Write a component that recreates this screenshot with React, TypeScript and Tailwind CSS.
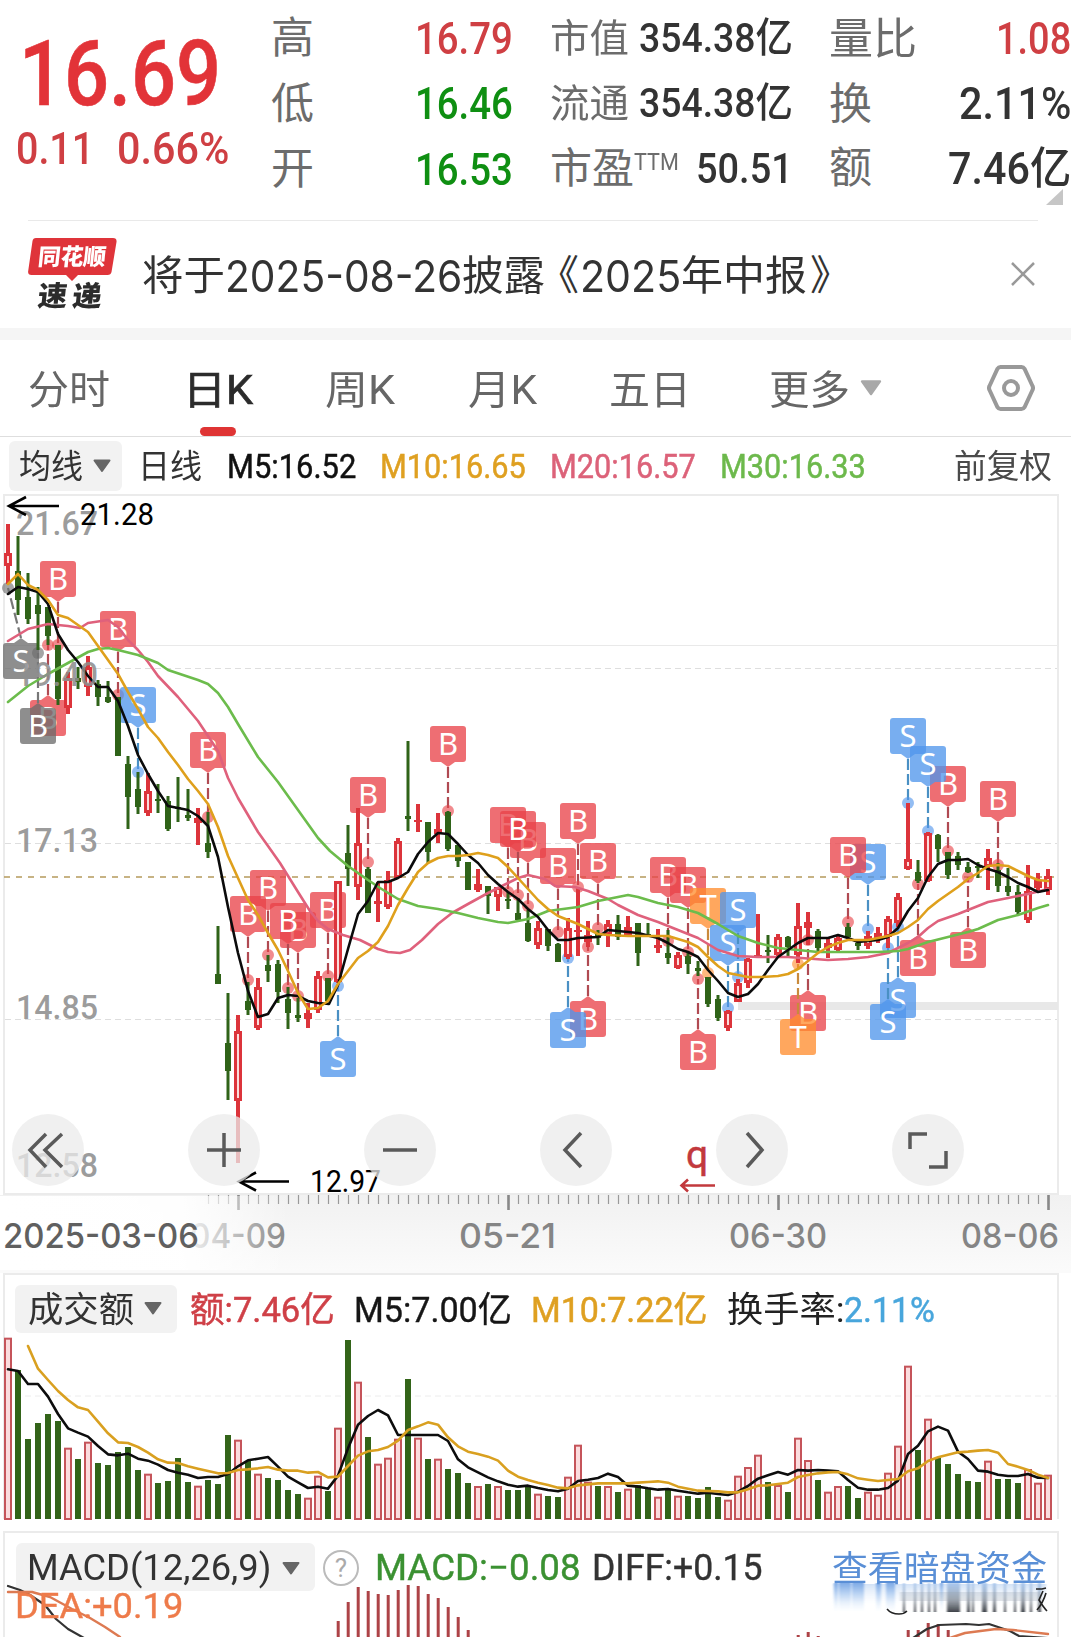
import { useLayoutEffect, useRef, useState } from 'react';
import clsx from 'clsx';

type Pt = [number, number];
type Candle = ['r' | 'g', number, number, number, number];
type Marker = {
  kind: 'B' | 'S' | 'T';
  tone: 'red' | 'blue' | 'orange' | 'gray';
  x: number;
  top: number;
  dot: number;
  up?: boolean;
  dotX?: number;
};

const STEP = 10;
const X0 = 8;

// [direction, high, low, body top, body bottom]
const candles: Candle[] = [
  ['r', 524, 584, 553, 566], ['g', 536, 615, 571, 600], ['g', 573, 624, 597, 619], ['g', 587, 650, 605, 614],
  ['g', 607, 645, 607, 636], ['g', 645, 705, 645, 699], ['r', 672, 714, 678, 708], ['g', 667, 689, 678, 682],
  ['r', 656, 696, 667, 687], ['g', 680, 706, 684, 697], ['g', 681, 703, 697, 702], ['g', 697, 756, 697, 756],
  ['g', 756, 829, 764, 797], ['g', 772, 814, 789, 807], ['r', 773, 816, 791, 813], ['g', 784, 813, 799, 801],
  ['g', 796, 831, 801, 829], ['g', 777, 822, 807, 808], ['g', 789, 821, 815, 818], ['r', 808, 845, 818, 823],
  ['g', 812, 858, 843, 852], ['g', 926, 984, 974, 984], ['g', 993, 1100, 1043, 1071], ['r', 1015, 1163, 1031, 1101],
  ['g', 982, 1015, 1001, 1010], ['r', 978, 1030, 987, 1028], ['g', 955, 982, 965, 971], ['g', 960, 1003, 964, 992],
  ['g', 987, 1029, 999, 1013], ['g', 998, 1022, 1015, 1018], ['r', 1003, 1028, 1013, 1019], ['r', 971, 1013, 976, 1010],
  ['g', 978, 1001, 978, 1001], ['r', 881, 983, 881, 982], ['g', 825, 886, 853, 869], ['r', 808, 900, 843, 887],
  ['g', 867, 913, 869, 913], ['r', 882, 922, 901, 904], ['r', 871, 909, 880, 907], ['r', 838, 878, 841, 878],
  ['g', 741, 831, 816, 819], ['r', 804, 832, 820, 822], ['g', 822, 863, 822, 852], ['r', 813, 843, 829, 834],
  ['g', 811, 851, 812, 849], ['g', 845, 867, 845, 861], ['g', 862, 890, 862, 890], ['r', 869, 892, 884, 890],
  ['g', 886, 914, 886, 896], ['r', 887, 911, 887, 897], ['g', 892, 909, 899, 901], ['g', 898, 920, 913, 920],
  ['g', 910, 942, 923, 941], ['r', 921, 949, 928, 945], ['g', 929, 951, 929, 946], ['g', 943, 962, 944, 962],
  ['r', 918, 959, 928, 957], ['r', 887, 956, 930, 932], ['r', 921, 947, 935, 942], ['g', 930, 945, 933, 938],
  ['r', 920, 947, 924, 935], ['g', 915, 940, 924, 937], ['r', 916, 937, 927, 935], ['g', 923, 966, 923, 953],
  ['g', 923, 937, 934, 935], ['r', 929, 953, 945, 948], ['g', 930, 964, 953, 958], ['r', 952, 969, 955, 968],
  ['g', 952, 974, 956, 964], ['g', 961, 976, 968, 971], ['g', 977, 1007, 977, 1004], ['g', 995, 1021, 999, 1018],
  ['r', 1010, 1031, 1011, 1028], ['r', 979, 1002, 983, 1002], ['r', 958, 988, 959, 983], ['r', 914, 957, 955, 957],
  ['g', 935, 963, 950, 951], ['r', 934, 956, 937, 955], ['g', 936, 957, 937, 947], ['r', 903, 963, 926, 955],
  ['r', 912, 945, 922, 928], ['g', 929, 951, 931, 948], ['r', 938, 958, 943, 948], ['r', 935, 953, 938, 950],
  ['g', 923, 937, 927, 937], ['g', 941, 950, 943, 946], ['r', 931, 949, 936, 946], ['r', 927, 943, 933, 938],
  ['r', 916, 948, 919, 937], ['r', 893, 927, 897, 923], ['r', 803, 870, 859, 869], ['g', 860, 883, 872, 881],
  ['r', 832, 882, 833, 881], ['g', 834, 862, 835, 849], ['g', 852, 879, 852, 875], ['g', 852, 870, 856, 865],
  ['g', 862, 873, 867, 872], ['g', 862, 878, 866, 868], ['r', 849, 890, 858, 867], ['g', 863, 892, 870, 886],
  ['g', 868, 896, 886, 892], ['g', 885, 915, 892, 912], ['r', 865, 923, 891, 920], ['r', 873, 892, 880, 888],
  ['r', 869, 895, 876, 890],
];

const ma5: Pt[] = [[8, 594], [18, 587], [28, 589], [38, 592], [48, 604], [58, 634], [68, 650], [78, 662], [88, 676], [98, 687], [108, 687], [118, 701], [128, 726], [138, 755], [148, 774], [158, 791], [168, 806], [178, 808], [188, 810], [198, 816], [208, 826], [218, 857], [228, 907], [238, 953], [248, 991], [258, 1017], [268, 1014], [278, 998], [288, 995], [298, 996], [308, 1001], [318, 1003], [329, 1004], [338, 985], [348, 949], [358, 914], [368, 901], [378, 882], [388, 882], [398, 878], [408, 872], [418, 854], [428, 842], [438, 833], [448, 834], [458, 844], [468, 855], [478, 863], [488, 875], [498, 884], [508, 892], [518, 899], [528, 909], [538, 917], [548, 930], [558, 940], [568, 940], [578, 938], [598, 937], [608, 930], [618, 931], [638, 933], [658, 938], [668, 943], [678, 949], [688, 952], [698, 957], [708, 970], [718, 981], [728, 993], [738, 997], [748, 994], [758, 984], [768, 970], [778, 957], [788, 950], [798, 943], [808, 938], [828, 938], [838, 935], [848, 938], [858, 942], [878, 940], [888, 937], [898, 928], [908, 911], [918, 898], [928, 877], [938, 864], [948, 860], [958, 860], [968, 859], [978, 865], [988, 869], [998, 872], [1008, 877], [1018, 883], [1028, 887], [1038, 892], [1048, 890]];
const ma10: Pt[] = [[8, 584], [18, 574], [28, 585], [38, 590], [48, 600], [58, 615], [68, 618], [78, 625], [88, 632], [98, 646], [108, 660], [118, 674], [128, 692], [138, 709], [148, 727], [158, 738], [168, 752], [178, 765], [188, 779], [198, 791], [208, 804], [218, 827], [228, 856], [238, 878], [248, 900], [258, 915], [268, 933], [278, 950], [288, 971], [298, 993], [308, 1009], [318, 1008], [328, 1001], [338, 984], [348, 971], [358, 958], [368, 951], [378, 942], [388, 926], [398, 905], [408, 888], [418, 872], [428, 863], [438, 858], [448, 856], [458, 856], [468, 855], [478, 853], [488, 855], [498, 858], [508, 867], [518, 878], [528, 889], [538, 900], [548, 909], [558, 916], [568, 920], [578, 924], [588, 929], [598, 934], [608, 935], [628, 936], [668, 936], [678, 939], [688, 942], [698, 947], [708, 957], [718, 966], [728, 973], [738, 975], [748, 977], [762, 977], [778, 976], [788, 974], [798, 969], [808, 961], [818, 953], [828, 947], [838, 943], [848, 940], [868, 940], [888, 936], [898, 933], [908, 927], [918, 920], [928, 909], [938, 901], [948, 894], [958, 887], [968, 879], [978, 873], [988, 866], [998, 865], [1008, 866], [1018, 871], [1028, 876], [1038, 880], [1048, 881]];
const ma20: Pt[] = [[8, 641], [18, 635], [28, 629], [48, 624], [68, 626], [80, 628], [88, 623], [108, 620], [118, 627], [128, 640], [138, 650], [148, 662], [158, 676], [178, 697], [198, 721], [218, 751], [228, 778], [238, 798], [248, 815], [258, 832], [268, 846], [280, 863], [298, 892], [310, 911], [318, 921], [328, 929], [343, 935], [360, 940], [378, 949], [388, 952], [400, 953], [410, 950], [422, 940], [438, 924], [452, 913], [468, 904], [488, 893], [502, 886], [518, 878], [528, 875], [545, 879], [555, 886], [575, 887], [588, 891], [608, 899], [618, 905], [638, 915], [658, 922], [678, 930], [698, 938], [708, 944], [718, 950], [738, 956], [758, 957], [788, 957], [828, 960], [848, 959], [868, 957], [888, 953], [908, 943], [918, 937], [928, 928], [938, 921], [958, 914], [978, 906], [988, 902], [1008, 898], [1028, 894], [1048, 889]];
const ma30: Pt[] = [[8, 702], [28, 686], [48, 674], [68, 663], [88, 652], [98, 649], [108, 648], [118, 650], [138, 655], [158, 663], [168, 670], [180, 674], [198, 680], [208, 684], [218, 693], [228, 707], [238, 724], [258, 757], [278, 782], [298, 810], [318, 838], [330, 851], [348, 866], [368, 880], [380, 888], [398, 899], [418, 906], [438, 909], [458, 913], [478, 918], [498, 922], [508, 923], [528, 919], [548, 911], [578, 907], [598, 901], [618, 897], [628, 895], [638, 897], [658, 903], [678, 907], [698, 913], [718, 924], [738, 936], [758, 943], [778, 948], [798, 950], [818, 952], [878, 952], [898, 951], [908, 949], [928, 942], [948, 937], [968, 932], [978, 929], [998, 920], [1018, 915], [1038, 908], [1048, 905]];

const markers: Marker[] = [
  { kind: 'S', tone: 'gray', x: 21, top: 643, dot: 588, up: true, dotX: 8 },
  { kind: 'B', tone: 'red', x: 48, top: 700, dot: 645, up: true },
  { kind: 'B', tone: 'gray', x: 38, top: 708, dot: 653, up: true },
  { kind: 'B', tone: 'red', x: 58, top: 561, dot: 645 },
  { kind: 'B', tone: 'red', x: 118, top: 611, dot: 695 },
  { kind: 'S', tone: 'blue', x: 138, top: 687, dot: 772 },
  { kind: 'B', tone: 'red', x: 208, top: 732, dot: 817 },
  { kind: 'B', tone: 'red', x: 268, top: 870, dot: 955 },
  { kind: 'B', tone: 'red', x: 248, top: 896, dot: 980 },
  { kind: 'B', tone: 'red', x: 298, top: 912, dot: 996 },
  { kind: 'B', tone: 'red', x: 288, top: 903, dot: 988 },
  { kind: 'B', tone: 'red', x: 328, top: 892, dot: 976 },
  { kind: 'S', tone: 'blue', x: 338, top: 1041, dot: 986, up: true },
  { kind: 'B', tone: 'red', x: 368, top: 777, dot: 862 },
  { kind: 'B', tone: 'red', x: 448, top: 726, dot: 811 },
  { kind: 'B', tone: 'red', x: 508, top: 807, dot: 892 },
  { kind: 'B', tone: 'red', x: 528, top: 822, dot: 906 },
  { kind: 'B', tone: 'red', x: 518, top: 811, dot: 895 },
  { kind: 'B', tone: 'red', x: 558, top: 848, dot: 932 },
  { kind: 'B', tone: 'red', x: 578, top: 803, dot: 887 },
  { kind: 'B', tone: 'red', x: 598, top: 843, dot: 928 },
  { kind: 'B', tone: 'red', x: 588, top: 1001, dot: 947, up: true },
  { kind: 'S', tone: 'blue', x: 568, top: 1012, dot: 958, up: true },
  { kind: 'B', tone: 'red', x: 668, top: 857, dot: 941 },
  { kind: 'B', tone: 'red', x: 688, top: 867, dot: 952 },
  { kind: 'B', tone: 'red', x: 698, top: 1034, dot: 979, up: true },
  { kind: 'T', tone: 'orange', x: 708, top: 888, dot: 973 },
  { kind: 'S', tone: 'blue', x: 728, top: 925, dot: 1008 },
  { kind: 'S', tone: 'blue', x: 738, top: 892, dot: 977 },
  { kind: 'B', tone: 'red', x: 808, top: 995, dot: 940, up: true },
  { kind: 'T', tone: 'orange', x: 798, top: 1019, dot: 964, up: true },
  { kind: 'S', tone: 'blue', x: 868, top: 844, dot: 929 },
  { kind: 'B', tone: 'red', x: 848, top: 837, dot: 922 },
  { kind: 'S', tone: 'blue', x: 898, top: 982, dot: 927, up: true },
  { kind: 'S', tone: 'blue', x: 888, top: 1004, dot: 948, up: true },
  { kind: 'S', tone: 'blue', x: 908, top: 718, dot: 803 },
  { kind: 'B', tone: 'red', x: 948, top: 766, dot: 851 },
  { kind: 'S', tone: 'blue', x: 928, top: 746, dot: 831 },
  { kind: 'B', tone: 'red', x: 918, top: 940, dot: 884, up: true },
  { kind: 'B', tone: 'red', x: 968, top: 932, dot: 877, up: true },
  { kind: 'B', tone: 'red', x: 998, top: 781, dot: 865 },
];

const markerFill = { red: '#e94349', blue: '#5095ec', orange: '#ff8c2e', gray: '#6c6c6c' };
const markerLine = { red: '#b04a52', blue: '#4a90c4', orange: '#c98a3c', gray: '#777' };

// bar heights of the turnover panel, in thirds of a pixel from its top edge
const volumes =
  'r203 g300 g507 g459 g432 g453 r533 g567 r515 g579 g585 g546 g531 g600 r611 g639 g633 g564 g636 r647 g630 g642 g495 r509 g573 r611 g624 g630 g660 g672 r683 r617 g663 r473 g210 r335 g501 r581 r563 r506 g327 r503 g567 r566 g597 g609 g639 r648 g642 r648 g660 g660 g645 r671 g678 g681 r620 r524 r635 g648 r648 g666 r656 g645 g655 r680 g660 r677 g678 g684 g651 g681 r689 r617 r591 r554 g636 r645 g666 r503 r570 g630 r665 r648 g648 g684 r665 r674 r608 r527 r287 g540 r446 g564 g582 g612 g633 g636 r572 g627 g627 g639 r597 r638 r614'
    .split(' ')
    .map((s) => ({ up: s[0] === 'r', top: 1270 + Number(s.slice(1)) / 3 }));

// one value per bar, the slow average starts two bars later
const volMa5 = [298, 303, 342, 342, 380, 432, 475, 488, 500, 528, 553, 556, 551, 566, 572, 584, 600, 608, 614, 624, 621, 621, 612, 589, 571, 566, 561, 590, 620, 637, 654, 650, 656, 617, 535, 464, 438, 420, 436, 495, 495, 495, 495, 495, 513, 568, 592, 607, 622, 634, 644, 650, 647, 654, 660, 664, 656, 633, 629, 624, 611, 621, 647, 650, 655, 659, 657, 662, 667, 671, 668, 672, 675, 665, 648, 626, 616, 606, 614, 600, 602, 600, 602, 604, 630, 653, 659, 659, 654, 632, 552, 527, 484, 470, 482, 545, 567, 602, 605, 614, 618, 618, 612, 623, 624];
const volMa10 = [228, 296, 330, 363, 390, 412, 420, 455, 490, 517, 519, 531, 548, 568, 578, 579, 589, 596, 603, 610, 609, 600, 598, 595, 591, 599, 602, 602, 608, 606, 622, 620, 588, 557, 544, 540, 531, 512, 480, 469, 457, 464, 502, 529, 545, 552, 560, 572, 602, 620, 630, 638, 645, 653, 655, 646, 643, 640, 640, 640, 640, 638, 636, 634, 638, 650, 656, 662, 663, 664, 667, 667, 658, 647, 646, 642, 638, 621, 615, 610, 607, 606, 613, 625, 629, 633, 630, 627, 604, 595, 573, 562, 554, 547, 545, 542, 540, 548, 582, 590, 600, 614, 624];

const macdBars: Pt[] = [[338, 1621], [348, 1602], [358, 1587], [368, 1591], [378, 1594], [388, 1595], [398, 1590], [408, 1585], [418, 1586], [428, 1594], [438, 1598], [448, 1607], [458, 1617], [468, 1630], [798, 1635], [808, 1632], [818, 1636], [908, 1630], [918, 1630], [928, 1623], [938, 1624], [948, 1630]];

// [x, width, darkness] of the streaks that trail under the link
const streaks: [number, number, number][] = [
  [834, 4, 0], [839, 12, 0], [852, 12, 0], [876, 5, 0], [886, 9, 0], [903, 2, 1], [914, 2, 1], [921, 2, 1],
  [928, 2, 1], [934, 2, 1], [940, 3, 0], [947, 13, 1], [967, 3, 1], [972, 2, 1], [982, 5, 1], [993, 3, 1],
  [1004, 2, 1], [1014, 2, 1], [1021, 4, 1], [1030, 2, 1], [1038, 3, 1],
];

const toPoints = (pts: Pt[]) => pts.map((p) => p.join(',')).join(' ');

// Squeezes a run of text to the width of its box.
function FitText({ children, className }: { children: string; className?: string }) {
  const box = useRef<HTMLSpanElement>(null);
  const inner = useRef<HTMLSpanElement>(null);
  const [scale, setScale] = useState(1);

  useLayoutEffect(() => {
    if (box.current && inner.current) {
      setScale(box.current.offsetWidth / inner.current.offsetWidth);
    }
  }, [children]);

  return (
    <span ref={box} className={clsx('inline-flex shrink-0 justify-start whitespace-nowrap', className)}>
      <span ref={inner} className="inline-block shrink-0 origin-left" style={{ transform: `scaleX(${scale})` }}>
        {children}
      </span>
    </span>
  );
}

function Caret({ className }: { className?: string }) {
  return (
    <svg viewBox="0 0 20 14" className={clsx('shrink-0', className)}>
      <path d="M2.5 1.5h15L10 12z" fill="currentColor" stroke="currentColor" strokeWidth="2" strokeLinejoin="round" />
    </svg>
  );
}

function Quote() {
  return (
    <header className="flex h-[220px] shrink-0 leading-none">
      <div className="flex w-[271px] flex-col pt-[29px]">
        <FitText className="ml-[19px] w-[202px] text-[91px] leading-[91px] font-medium text-[#e23338] [-webkit-text-stroke:0.6px]">
          16.69
        </FitText>
        <div className="mt-[7px] flex leading-[44px] text-[#cf3f43]">
          <FitText className="ml-[16px] w-[78px] text-[45px] font-medium">0.11</FitText>
          <FitText className="ml-[23px] w-[112px] text-[45px] font-medium">0.66%</FitText>
        </div>
      </div>

      <div className="w-[242px] pt-[5px] text-[#6c6c6c]">
        {[
          ['高', '16.79', 'text-[#cf3f43]'],
          ['低', '16.46', 'text-[#0f8f12]'],
          ['开', '16.53', 'text-[#0f8f12]'],
        ].map(([label, value, tone]) => (
          <div key={label} className="flex h-[65.5px] items-center justify-between">
            <span className="pt-[2px] text-[43px]">{label}</span>
            <FitText className={clsx('w-[98px] pt-px text-[45px] font-medium', tone)}>{value}</FitText>
          </div>
        ))}
      </div>

      <div className="ml-[37px] w-[243px] pt-[5px] text-[#6c6c6c]">
        {['市值', '流通'].map((label) => (
          <div key={label} className="flex h-[65.5px] items-center justify-between">
            <FitText className="w-[79px] pt-[3px] text-[39px]">{label}</FitText>
            <FitText className="w-[154px] pt-px text-[41px] font-medium text-[#333]">354.38亿</FitText>
          </div>
        ))}
        <div className="flex h-[65.5px] items-center justify-between">
          <span className="flex items-center text-[42px]">
            市盈
            <FitText className="mb-[14px] w-[45px] text-[24px]">TTM</FitText>
          </span>
          <FitText className="w-[97px] text-[43px] font-medium text-[#333]">50.51</FitText>
        </div>
      </div>

      <div className="relative ml-[36px] w-[242px] pt-[5px] text-[#6c6c6c]">
        <div className="flex h-[65.5px] items-center justify-between">
          <FitText className="w-[88px] pt-[3px] text-[43px]">量比</FitText>
          <FitText className="w-[75px] pt-px text-[45px] font-medium text-[#cf3f43]">1.08</FitText>
        </div>
        <div className="flex h-[65.5px] items-center justify-between">
          <span className="pt-[3px] text-[43px]">换</span>
          <FitText className="w-[112px] pt-px text-[45px] font-medium text-[#333]">2.11%</FitText>
        </div>
        <div className="flex h-[65.5px] items-center justify-between">
          <span className="text-[43px]">额</span>
          <FitText className="w-[123px] text-[44px] font-medium text-[#333]">7.46亿</FitText>
        </div>
        <svg viewBox="0 0 17 16" className="absolute top-[189px] left-[217px] h-[16px] w-[17px]">
          <path d="M17 0v16H0z" fill="#c6c6c6" />
        </svg>
      </div>
    </header>
  );
}

function Notice() {
  return (
    <section className="flex h-[108px] shrink-0 items-center">
      <div className="mr-[25px] ml-[28px] flex h-[108px] w-[89px] flex-col pt-[18px]">
        <div className="relative h-[45px]">
          <svg viewBox="0 0 89 44" className="absolute inset-0 h-[44px] w-[89px]">
            <path d="M8 0h77q4 0 3.500 4l-5 30q-.6 3-4 3H50l-6 6-6-6H3.500q-4 0-3.300-4L4.500 3Q5 0 8 0z" fill="#df343a" />
          </svg>
          <FitText className="absolute top-[8px] left-[10px] w-[68px] -skew-x-6 text-[23px] leading-[24px] font-black text-white">
            同花顺
          </FitText>
        </div>
        <FitText className="ml-[10px] w-[69px] -skew-x-6 text-[28px] leading-[28px] font-black tracking-[5px] text-[#2c2c2c]">
          速递
        </FitText>
      </div>
      <div className="flex pt-[3px] text-[41px] leading-[54px] text-[#333]">
        <FitText className="w-[83px]">将于</FitText>
        <FitText className="w-[237px] text-[44px] [font-family:Inter,sans-serif]">2025-08-26</FitText>
        <FitText className="w-[83px]">披露</FitText>
        <span className="-ml-[7px]">《</span>
        <FitText className="ml-px w-[101px] text-[44px] [font-family:Inter,sans-serif]">2025</FitText>
        <FitText className="w-[126px]">年中报</FitText>
        <span className="ml-[3px]">》</span>
      </div>
      <svg viewBox="0 0 24 24" className="mr-[36px] ml-auto h-[24px] w-[24px]">
        <path d="M1 1l22 22M23 1L1 23" stroke="#999" strokeWidth="2.500" />
      </svg>
    </section>
  );
}

function Tabs() {
  return (
    <nav className="flex h-[97px] shrink-0 items-center border-b border-[#dedede] text-[40px] leading-[60px] text-[#666]">
      <FitText className="ml-[28px] w-[82px] pt-[5px]">分时</FitText>
      <div className="relative ml-[73px] flex pt-[5px]">
        <FitText className="w-[70px] text-[#2b2b2b] [-webkit-text-stroke:0.7px]">日K</FitText>
        <div className="absolute top-[71px] left-[17px] h-[9px] w-[36px] rounded-full bg-[#df3434]" />
      </div>
      <FitText className="ml-[72px] w-[70px] pt-[5px]">周K</FitText>
      <FitText className="ml-[73px] w-[69px] pt-[5px]">月K</FitText>
      <FitText className="ml-[72px] w-[82px] pt-[5px]">五日</FitText>
      <FitText className="ml-[78px] w-[81px] pt-[5px]">更多</FitText>
      <Caret className="ml-[9px] h-[20px] w-[24px] text-[#a8a8a8]" />
      <svg viewBox="0 0 48 46" className="ml-[104px] h-[46px] w-[48px]" fill="none" stroke="#999">
        <path d="M13.500 2h21q2 0 3 1.700l8 17.300q1 2 0 4l-8 17.300q-1 1.700-3 1.700h-21q-2 0-3-1.700l-8-17.300q-1-2 0-4l8-17.300q1-1.700 3-1.700z" strokeWidth="4" />
        <circle cx="24" cy="23" r="7" strokeWidth="4" />
      </svg>
    </nav>
  );
}

function MaBar() {
  return (
    <div className="flex h-[57px] shrink-0 items-center text-[33px] leading-[50px] [&>span]:pt-[3px]">
      <div className="ml-[9px] flex h-[50px] w-[113px] items-center rounded-md bg-[#f2f2f2] text-[#333]">
        <FitText className="ml-[10px] w-[64px] pt-[3px]">均线</FitText>
        <Caret className="ml-[9px] h-[14px] w-[20px] text-[#666]" />
      </div>
      <FitText className="ml-[16px] w-[64px] text-[#333]">日线</FitText>
      <FitText className="ml-[25px] w-[129px] text-[#111] [-webkit-text-stroke:0.5px]">M5:16.52</FitText>
      <FitText className="ml-[24px] w-[146px] text-[#dfa021] [-webkit-text-stroke:0.5px]">M10:16.65</FitText>
      <FitText className="ml-[24px] w-[146px] text-[#dc6279] [-webkit-text-stroke:0.5px]">M20:16.57</FitText>
      <FitText className="ml-[24px] w-[146px] text-[#6db94c] [-webkit-text-stroke:0.5px]">M30:16.33</FitText>
      <FitText className="ml-[88px] w-[98px] text-[#4a4a4a]">前复权</FitText>
    </div>
  );
}

function MarkerBox({ m }: { m: Marker }) {
  const fill = markerFill[m.tone];
  const tip = m.up ? m.top - 5 : m.top + 41;
  const base = m.up ? m.top : m.top + 36;
  const dx = m.dotX ?? m.x;
  return (
    <g>
      <line x1={m.x} y1={tip} x2={dx} y2={m.dot} stroke={markerLine[m.tone]} strokeWidth="2.200" strokeDasharray="11 4" />
      <circle cx={dx} cy={m.dot} r="6" fill={fill} fillOpacity="0.62" />
      <g fill={fill} fillOpacity="0.77">
        <rect x={m.x - 18} y={m.top} width="36" height="36" rx="3" />
        <path d={`M${m.x - 7} ${base}H${m.x + 7}L${m.x} ${tip}z`} />
      </g>
      <text x={m.x} y={m.top + 29} textAnchor="middle" fontSize="31" fill="#fff" className="[font-family:'Noto_Sans',sans-serif]">
        {m.kind}
      </text>
    </g>
  );
}

function ChartLine({ points, color, width = 2.6 }: { points: Pt[]; color: string; width?: number }) {
  return <polyline points={toPoints(points)} fill="none" stroke={color} strokeWidth={width} strokeLinejoin="round" strokeLinecap="round" />;
}

const priceLabels: [string, number][] = [['21.67', 535], ['19.40', 686], ['17.13', 852], ['14.85', 1019], ['12.58', 1177]];

function KChart() {
  return (
    <section className="relative h-[776px] shrink-0">
      <svg viewBox="0 494 1071 776" className="block h-[776px] w-[1071px]">
        <defs>
          <linearGradient id="axis" x1="0" x2="0" y1="0" y2="1">
            <stop offset="0" stopColor="#f1f1f1" />
            <stop offset="1" stopColor="#fbfbfb" />
          </linearGradient>
          <linearGradient id="fade" x1="0" x2="1" y1="0" y2="0">
            <stop offset="0" stopColor="#fff" />
            <stop offset="0.62" stopColor="#fff" stopOpacity="0.95" />
            <stop offset="1" stopColor="#fff" stopOpacity="0" />
          </linearGradient>
        </defs>
        <rect x="0" y="1195" width="1071" height="78" fill="url(#axis)" />
        <rect x="4" y="495" width="1054" height="699" fill="#fff" stroke="#ebebeb" strokeWidth="2" />
        <line x1="5" x2="1057" y1="645.500" y2="645.500" stroke="#e9e9e9" />
        {[668.5, 843.5, 1019.5].map((y) => (
          <line key={y} x1="5" x2="1057" y1={y} y2={y} stroke="#dedede" strokeDasharray="6 4" />
        ))}
        <rect x="738" y="1002" width="320" height="8" fill="#e8e8e8" />
        <line x1="4" x2="1057" y1="877" y2="877" stroke="#b59a5c" strokeWidth="1.500" strokeDasharray="6 6" />

        {markers.map((m, i) => (
          <MarkerBox key={i} m={m} />
        ))}

        {candles.map(([dir, high, low, top, bottom], i) => {
          const x = X0 + i * STEP;
          const h = Math.max(bottom - top, 2);
          if (dir === 'g') {
            return (
              <g key={i} fill="#2f6318">
                <rect x={x - 1.5} y={high} width="3" height={low - high} />
                <rect x={x - 3} y={top} width="6" height={h} />
              </g>
            );
          }
          return (
            <g key={i} fill="#dc343b">
              <rect x={x - 2} y={high} width="4" height={low - high} />
              <rect x={x - 4} y={top} width="8" height={h} />
              {h > 8 && <rect x={x - 1} y={top + 3} width="2" height={h - 6} fill="#fbdcdc" />}
            </g>
          );
        })}

        <ChartLine points={ma20} color="#df617c" />
        <ChartLine points={ma30} color="#6cbc4c" />
        <ChartLine points={ma5} color="#0b0b0b" />
        <ChartLine points={ma10} color="#dfa01c" />

        <g fontSize="34" fontWeight="500" fill="#8e8e8e" fillOpacity="0.88">
          {priceLabels.map(([label, y]) => (
            <text key={label} x="16" y={y} textLength="82" lengthAdjust="spacingAndGlyphs">
              {label}
            </text>
          ))}
        </g>

        <g stroke="#000" strokeWidth="2.600" fill="none">
          <path d="M59 506H9M26 497L9 506l17 9" />
          <path d="M289 1181.500H240M256 1172.500l-17 9 17 9" />
        </g>
        <g fontSize="31" fill="#000">
          <text x="80" y="525" textLength="74" lengthAdjust="spacingAndGlyphs">21.28</text>
          <text x="310" y="1192" textLength="71" lengthAdjust="spacingAndGlyphs">12.97</text>
        </g>

        <text x="686" y="1168" fontSize="39" fill="#c2393d" stroke="#c2393d" strokeWidth="0.500">q</text>
        <path d="M715 1185.500H682M688 1179.500l-6.500 6 6.500 6" stroke="#c2393d" strokeWidth="2.600" fill="none" />

        <g stroke="#999" strokeWidth="1.200">
          {Array.from({ length: 85 }, (_, i) => 208 + i * STEP).map((x) => (
            <line key={x} x1={x + 0.5} x2={x + 0.5} y1="1195" y2="1204" />
          ))}
        </g>
        <g stroke="#888" strokeWidth="2.600">
          {[238, 508, 778, 1048].map((x) => (
            <line key={x} x1={x + 0.5} x2={x + 0.5} y1="1195" y2="1210" />
          ))}
        </g>
        <g fontSize="34.500" fontWeight="500" fill="#858585" className="[font-family:Inter,sans-serif]">
          <text x="190" y="1248" textLength="96" lengthAdjust="spacingAndGlyphs">04-09</text>
          <text x="459" y="1248" textLength="97" lengthAdjust="spacingAndGlyphs">05-21</text>
          <text x="729" y="1248" textLength="98" lengthAdjust="spacingAndGlyphs">06-30</text>
          <text x="961" y="1248" textLength="98" lengthAdjust="spacingAndGlyphs">08-06</text>
          <rect x="0" y="1196" width="290" height="74" fill="url(#fade)" />
          <text x="3" y="1248" fill="#606060" textLength="196" lengthAdjust="spacingAndGlyphs">2025-03-06</text>
        </g>
      </svg>

      <div className="absolute top-[620px] left-[12px] flex gap-[104px]">
        {[
          'M34 20L18 36l16 17M50 20L33 36l17 17',
          'M36 19v34M19 36h34',
          'M19 36h34',
          'M41 19L25 36l16 17',
          'M31 19l15 17-15 17',
          'M18 35V20h17M54 37v16H37',
        ].map((d) => (
          <svg key={d} viewBox="0 0 72 72" className="h-[72px] w-[72px] rounded-full bg-[#ebebeb]/75">
            <path d={d} fill="none" stroke="#5a5a5a" strokeWidth="3.500" />
          </svg>
        ))}
      </div>
    </section>
  );
}

function VolumePanel() {
  return (
    <section className="relative h-[258px] shrink-0">
      <svg viewBox="0 1270 1071 258" className="absolute inset-0 h-[258px] w-[1071px]">
        <rect x="0" y="1270" width="1071" height="3" fill="#fafafa" />
        <path d="M4 1519V1274H1058V1519" fill="none" stroke="#ebebeb" strokeWidth="2" />
        <line x1="5" x2="1057" y1="1396" y2="1396" stroke="#ececec" strokeDasharray="6 4" />
        {volumes.map(({ up, top }, i) => {
          const x = X0 + i * STEP;
          return up ? (
            <rect key={i} x={x - 3} y={top + 1} width="6" height={1518 - top} fill="#fbdcde" stroke="#c5545a" strokeWidth="2" />
          ) : (
            <rect key={i} x={x - 3} y={top} width="6" height={1519 - top} fill="#336419" />
          );
        })}
        <ChartLine points={volMa5.map((v, i): Pt => [X0 + i * STEP, 1270 + v / 3])} color="#0d0d0d" />
        <ChartLine points={volMa10.map((v, i): Pt => [X0 + (i + 2) * STEP, 1270 + v / 3])} color="#d9a020" />
      </svg>
      <div className="relative flex h-[77px] items-center text-[35px] leading-[48px] [&>span]:pt-[4px]">
        <div className="ml-[15px] flex h-[48px] w-[162px] items-center rounded-md bg-[#f2f2f2]">
          <FitText className="ml-[13px] w-[106px] pt-[5px] text-[#333]">成交额</FitText>
          <Caret className="ml-[9px] h-[15px] w-[20px] text-[#666]" />
        </div>
        <FitText className="ml-[13px] w-[145px] text-[#cf4047] [-webkit-text-stroke:0.5px]">额:7.46亿</FitText>
        <FitText className="ml-[19px] w-[158px] text-[#161616] [-webkit-text-stroke:0.4px]">M5:7.00亿</FitText>
        <FitText className="ml-[19px] w-[177px] text-[#dfa021] [-webkit-text-stroke:0.5px]">M10:7.22亿</FitText>
        <FitText className="ml-[19px] w-[117px] text-[#222]">换手率:</FitText>
        <FitText className="w-[91px] text-[#48a6dc] [-webkit-text-stroke:0.5px]">2.11%</FitText>
      </div>
    </section>
  );
}

function MacdPanel() {
  return (
    <section className="relative h-[109px] shrink-0 overflow-hidden">
      <svg viewBox="0 1528 1071 109" className="absolute inset-0 h-[109px] w-[1071px]">
        <defs>
          <linearGradient id="streakBlue" x1="0" x2="0" y1="0" y2="1">
            <stop offset="0" stopColor="#7fabe6" />
            <stop offset="1" stopColor="#cfe4fa" stopOpacity="0" />
          </linearGradient>
          <linearGradient id="streakDark" x1="0" x2="0" y1="0" y2="1">
            <stop offset="0" stopColor="#8db6ea" stopOpacity="0.6" />
            <stop offset="0.550" stopColor="#7d8794" stopOpacity="0.7" />
            <stop offset="1" stopColor="#2c3036" stopOpacity="0.9" />
          </linearGradient>
          <filter id="soft" x="-5%" y="-20%" width="110%" height="140%">
            <feGaussianBlur stdDeviation="0.9 0.2" />
          </filter>
        </defs>
        <path d="M4 1637V1532H1058V1637" fill="none" stroke="#ebebeb" strokeWidth="2" />
        <rect x="16" y="1543" width="299" height="48" rx="6" fill="#f2f2f2" />
        {macdBars.map(([x, y]) => (
          <rect key={x} x={x - 1.3} y={y} width="3" height={1637 - y} fill="#ad4347" />
        ))}
        <ChartLine points={[[8, 1586], [20, 1590], [30, 1595], [45, 1605], [56, 1619], [68, 1629], [84, 1638]]} color="#333" width={2.2} />
        <ChartLine points={[[8, 1592], [32, 1592], [50, 1597], [72, 1609], [90, 1618], [105, 1627], [120, 1637]]} color="#dd7a52" width={2.4} />
        <ChartLine points={[[913, 1638], [927, 1629], [939, 1625], [966, 1624], [979, 1625], [989, 1624], [1010, 1631], [1019, 1636], [1048, 1638]]} color="#333" width={2.2} />
        <ChartLine points={[[950, 1638], [965, 1633], [996, 1629], [1013, 1630], [1048, 1634]]} color="#dd7a52" width={2.4} />
        <g filter="url(#soft)">
          <rect x="833" y="1584" width="213" height="20" fill="url(#streakBlue)" opacity="0.35" />
          {streaks.map(([x, w, dark]) => (
            <rect key={x} x={x} y="1583" width={w} height="29" fill={dark ? 'url(#streakDark)' : 'url(#streakBlue)'} />
          ))}
          <rect x="900" y="1592" width="140" height="9" fill="#909aa8" opacity="0.25" />
        </g>
        <path d="M887 1609q4 5 12 5 5 0 8-3" fill="none" stroke="#222" strokeWidth="1.500" />
        <path d="M1036 1589h6l4-1M1043 1591l-4 9q5 8 8 11M1046 1593q-3 10-9 17" fill="none" stroke="#222" strokeWidth="1.600" />
      </svg>
      <div className="relative flex h-[80px] items-center text-[36px] leading-[48px]">
        <FitText className="ml-[27px] w-[244px] text-[#333]">MACD(12,26,9)</FitText>
        <Caret className="ml-[10px] h-[15px] w-[20px] text-[#666]" />
        <span className="ml-[22px] flex h-[36px] w-[36px] shrink-0 items-center justify-center rounded-full border-[2.5px] border-[#bbb] text-[26px] text-[#aaa]">
          ?
        </span>
        <FitText className="ml-[16px] w-[206px] text-[#3b9132] [-webkit-text-stroke:0.4px]">MACD:−0.08</FitText>
        <FitText className="ml-[11px] w-[171px] text-[#333] [-webkit-text-stroke:0.4px]">DIFF:+0.15</FitText>
        <FitText className="ml-[69px] w-[215px] pt-[3px] text-[35px] text-[#5a8fd6]">查看暗盘资金</FitText>
      </div>
      <div className="relative -mt-[25px] flex">
        <FitText className="ml-[15px] w-[168px] text-[35px] leading-[48px] text-[#ee7b4a] [-webkit-text-stroke:0.4px]">DEA:+0.19</FitText>
      </div>
    </section>
  );
}

export default function App() {
  return (
    <main className="flex h-[1637px] w-[1071px] flex-col overflow-hidden bg-white [font-family:Roboto,'Noto_Sans_CJK_SC',sans-serif]">
      <Quote />
      <div className="mr-[33px] -mb-px ml-[28px] h-px shrink-0 bg-[#e9e9e9]" />
      <Notice />
      <div className="h-[12px] shrink-0 bg-[#f5f5f5]" />
      <Tabs />
      <MaBar />
      <KChart />
      <VolumePanel />
      <MacdPanel />
    </main>
  );
}
